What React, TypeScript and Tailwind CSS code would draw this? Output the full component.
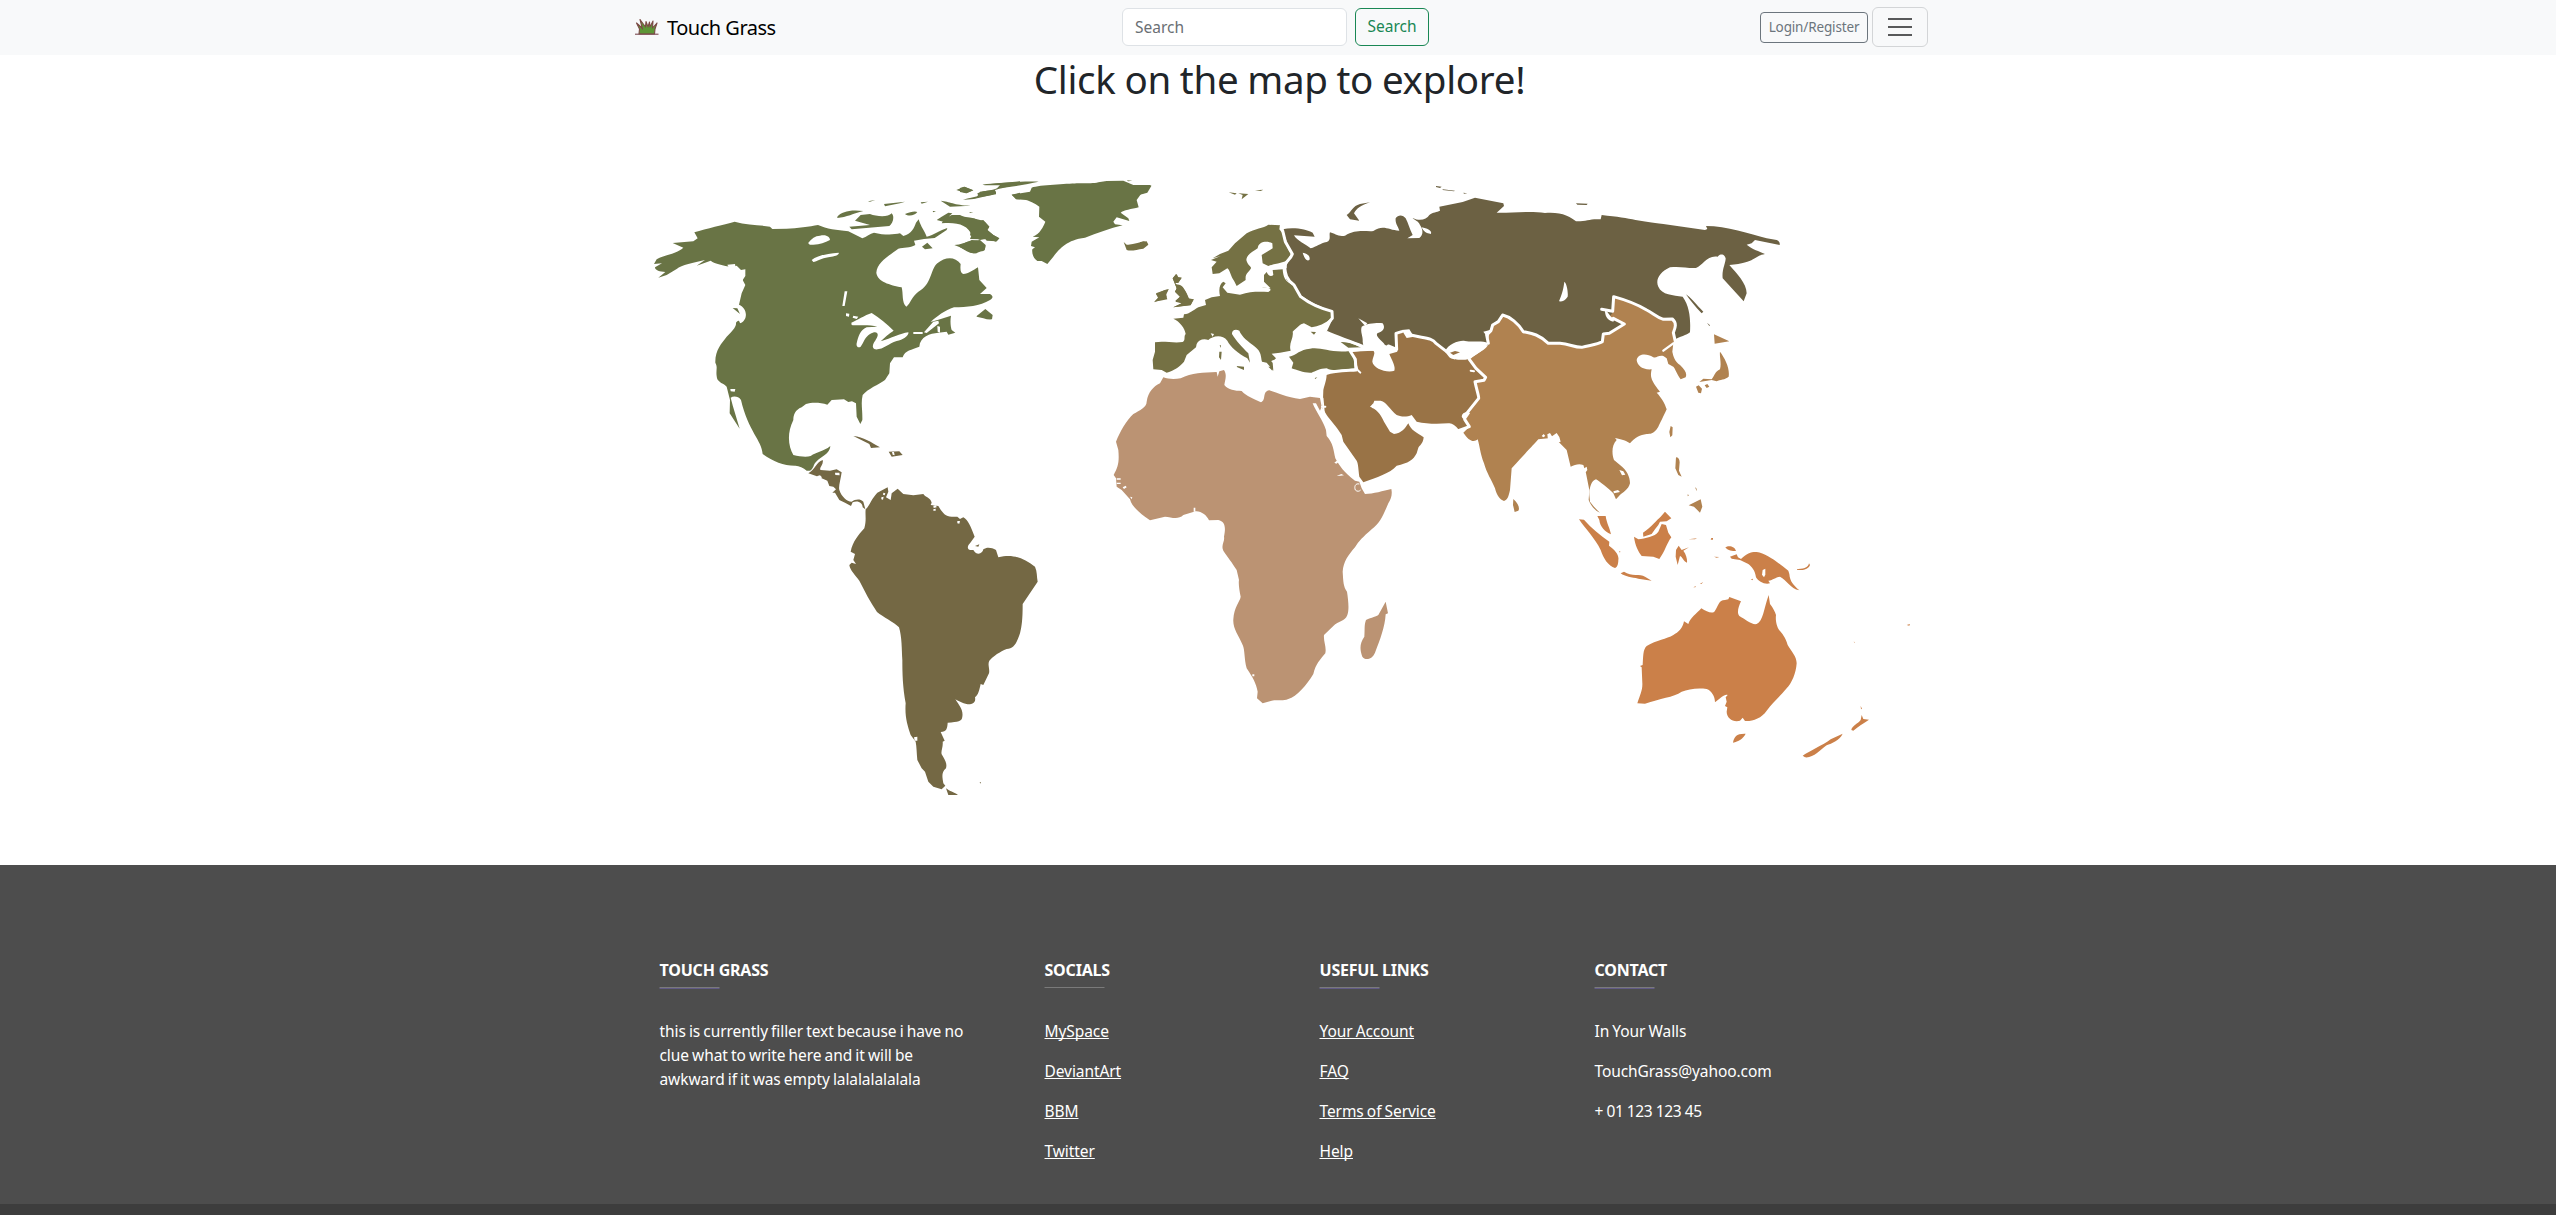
import React from "react";

const NA = "#697445";
const SA = "#746844";
const EU = "#757144";
const RU = "#6C6143";
const ME = "#997346";
const AS = "#B08250";
const AF = "#BB9373";
const OC = "#CB8049";

function NorthAmerica() {
  return (
    <g transform="translate(640 170) scale(.33333)" fill={NA}>
      <path d="M42,282 L50,268 C70,255 110,252 130,233 L98,219 160,214 173,205 163,187 C200,175 250,165 284,155 C320,165 360,165 390,170 L397,177 440,176 C470,175 510,170 534,165 C560,177 590,180 625,184 L667,205 C680,200 690,190 702,188 C730,195 760,195 780,190 L790,198 C815,190 822,175 828,158 L836,148 C842,170 855,185 860,200 C882,195 900,180 922,174 L920,180 884,204 852,207 822,212 826,225 C810,234 790,232 775,236 C750,255 712,275 709,308 C712,335 750,345 785,352 C790,370 785,400 799,410 C812,400 815,380 835,365 C875,345 870,300 892,280 C915,260 945,258 962,282 C960,300 962,310 970,312 C985,312 1000,300 1014,292 L1018,330 1040,354 1020,372 1050,372 C1060,378 1060,385 1050,390 C1020,408 980,412 942,412 C915,420 890,440 872,456 L900,448 933,437 C930,455 932,470 935,480 L946,488 925,494 920,485 895,488 C870,490 840,500 838,530 C815,540 795,540 788,562 L762,562 750,580 748,610 735,630 C715,645 685,655 668,675 C662,700 668,720 667,750 L661,762 650,740 648,700 636,694 625,696 612,688 575,690 562,704 C540,697 515,697 498,702 L485,712 C465,720 460,735 460,750 C440,790 445,830 460,855 C480,860 500,862 512,858 C530,845 550,845 571,828 C568,860 530,860 520,890 C515,900 510,904 500,902 C490,893 475,886 465,887 C430,887 400,875 368,852 C365,810 325,785 303,690 C295,678 280,678 272,683 C280,715 290,745 299,776 L269,730 270,690 260,650 C250,640 240,640 232,628 C225,600 235,595 226,578 C225,540 245,520 260,500 C275,485 290,470 288,458 C295,450 298,450 300,460 C325,450 323,415 297,404 L305,370 316,345 308,330 316,318 316,298 303,300 290,287 275,292 C250,285 225,283 212,272 L170,287 195,270 C160,278 125,285 110,297 L80,315 55,323 76,306 C60,305 45,302 45,292 L66,280 Z" />
      <path d="M592,140 C605,125 630,118 670,123 C640,130 620,142 592,144Z M628,170 L690,165 645,152 662,135 690,132 C710,140 745,142 755,130 C765,140 758,160 748,168 L635,178Z M732,102 L795,95 780,100 735,109Z M684,94 L706,90 690,95Z M795,132 C810,126 825,122 832,126 C825,137 805,140 795,132Z M842,97 L864,95 845,101Z M902,92 C930,95 940,105 992,107 L930,110Z M878,123 L888,123 880,127Z M949,60 L972,50 1000,61 978,70Z M1027,44 L1140,34 1140,40 C1110,50 1080,55 1065,60 L1068,70 C1050,78 1030,80 1010,82 L1020,65 C1050,62 1070,60 1085,46 L1035,46Z M968,88 L1010,84 1000,87Z M890,150 L905,140 925,128 937,130 910,155 Z M935,135 L960,135 C975,145 1005,140 1015,152 L1030,150 1048,170 1042,180 1060,195 1078,205 1070,214 1040,212 1030,198 1020,208 990,207 995,195 C985,165 950,155 905,160 C910,150 925,140 935,135Z M943,225 C960,225 985,215 995,210 C1015,210 1035,220 1035,232 C1038,248 1020,240 1010,250 C990,252 985,240 943,225Z M846,230 L862,218 878,235 855,238Z M1010,438 L1036,417 1058,435 1056,448 C1040,450 1025,442 1010,440Z M278,414 L292,415 300,432Z M988,126 L1000,128 990,129Z M1115,74 L1140,68 1140,88 1128,88Z" />
      <g fill="#fff" stroke="none">
        <path d="M505,218 C515,205 525,198 540,197 C560,192 570,202 570,210 C555,218 540,223 520,224 C508,225 505,222 505,218Z M515,270 C530,258 560,250 596,248 C600,255 580,260 565,262 C545,265 530,275 520,276Z M614,364 L622,364 614,408 607,408Z M618,430 L628,431 627,440 618,438Z M640,437 L655,440 650,447 638,443Z M634,458 C650,452 675,435 695,429 C720,445 740,462 761,482 C745,492 735,502 722,514 C755,505 780,490 805,487 C808,495 790,510 770,513 C745,520 730,540 705,538 C690,530 705,515 708,508 C720,490 710,480 690,492 C675,500 670,520 662,530 C655,535 648,530 650,520 C655,500 660,480 680,472 L712,470 C690,463 650,468 635,465Z M820,486 L848,486 848,492 820,492Z M852,487 L880,455 895,452 897,460 860,489Z M892,468 L900,470 900,488 893,485Z M271,657 L286,657 284,665 272,664Z M262,284 L285,282 288,298 266,292Z M300,320 L310,322 306,340 300,336Z M765,565 L778,565 770,578Z" />
      </g>
    </g>
  );
}

function Greenland() {
  return (
    <g transform="translate(960 160) scale(.33333)">
      <path fill={NA} d="M155,104 L210,95 215,83 C240,75 320,72 350,70 C380,68 400,72 415,67 L440,63 490,62 520,75 575,75 562,83 558,97 543,102 530,120 536,142 C515,148 490,150 482,158 L505,175 508,183 470,172 460,185 465,193 488,196 C450,205 410,220 375,233 C320,240 300,265 280,290 L262,312 245,303 232,303 C220,295 215,280 217,268 L225,262 213,258 215,245 238,232 218,230 C240,222 250,200 256,185 L237,170 238,140 C225,130 205,122 198,120 L170,118Z M500,61 L517,62 505,64Z M68,73 C120,68 190,64 236,65 C200,72 150,83 112,84 L120,75 80,75Z M0,84 L14,80 40,91 20,100 0,96Z M8,119 L55,108 52,100 C70,92 100,88 108,95 L108,103 C80,108 60,114 40,117Z M0,168 C20,175 55,175 75,186 L88,200 82,210 100,225 118,235 108,245 85,238 72,238 60,240 30,226 32,215 C20,200 10,192 0,190Z M0,256 C20,242 40,242 60,240 L77,255 C78,270 65,275 55,270 C45,290 20,275 0,262Z" />
      <path fill={EU} d="M491,246 L500,254 C520,256 540,244 560,244 L565,254 550,266 C530,268 515,275 500,270Z M582,427 L595,415 588,402 615,390 626,388 618,400 620,412 600,420Z M638,355 L650,342 655,352 665,353 655,368 645,370 650,374 C665,372 672,385 680,400 L688,418 702,418 692,435 640,442 665,430 646,425 660,410 645,395 650,385Z" />
    </g>
  );
}

function SouthAmerica() {
  return (
    <g transform="translate(800 420) scale(.33333)">
      <path fill={SA} d="M263,202 L265,215 258,232 272,240 275,220 293,206 310,222 340,226 370,222 C375,232 392,232 395,248 L392,255 415,258 C425,275 435,290 455,290 L472,290 480,297 490,292 C505,300 512,320 524,350 L510,370 C500,380 500,392 520,390 C532,410 548,400 550,388 C560,380 575,382 588,390 L595,412 C640,400 670,415 705,440 C712,455 710,470 713,485 L668,552 C668,600 665,620 660,640 C648,675 640,685 620,687 C600,695 580,708 568,722 C562,735 570,745 567,760 L550,795 542,792 C538,810 535,825 525,832 C528,845 520,852 510,853 C490,853 480,845 466,838 C480,860 490,870 487,890 C485,905 475,905 443,908 C442,925 440,935 422,936 L434,962 428,965 C430,980 422,995 425,1003 C435,1020 442,1030 438,1045 C422,1058 428,1075 430,1090 L436,1097 425,1108 400,1100 385,1085 375,1055 365,1045 352,1020 C350,1000 350,980 347,965 L332,945 C322,915 314,890 317,850 C308,800 307,760 307,720 C305,690 306,650 297,622 C280,605 250,592 231,576 C210,545 195,515 178,482 C165,465 150,450 148,435 L155,428 168,432 160,420 165,402 152,395 C158,365 175,345 193,325 C200,300 195,285 197,268 C210,255 215,235 232,218Z" />
      <path fill={SA} d="M25,160 C45,150 50,125 68,120 C72,135 55,145 62,150 L90,152 110,148 125,157 C122,180 115,200 118,210 C125,230 140,245 155,245 C165,238 180,235 190,245 L196,268 188,262 C188,250 175,240 158,247 L153,258 135,248 118,240 105,218 97,218 108,208 100,200 88,198 82,182 55,170Z M160,48 C190,50 215,68 240,82 L213,84 208,72Z M266,95 L298,94 308,105 275,110Z M438,1105 C450,1115 460,1115 474,1125 L445,1125 Z M525,378 L538,373 535,380Z M539,1086 L543,1087 541,1091Z" />
      <path fill="#fff" d="M105,158 L118,158 119,166 106,165Z M52,168 L60,166 66,172 60,178 50,175Z M250,218 L256,220 254,226 249,224Z M244,232 L251,230 249,239 244,238Z M400,257 L408,256 410,262 401,264Z M400,268 L407,266 407,272 400,272Z M472,303 L480,303 478,311 472,310Z M276,96 L282,96 284,106 278,104Z M342,952 L352,950 352,962 344,962Z" />
    </g>
  );
}

function Africa() {
  return (
    <g transform="translate(1100 260) scale(.33333)">
      <path fill={AF} d="M190,352 C205,358 225,358 242,355 C275,338 310,338 350,336 L353,350 358,334 372,330 C382,345 375,360 373,375 C385,390 405,392 425,393 C440,410 460,415 483,427 C500,420 485,395 508,391 C530,398 560,412 600,417 L630,410 660,414 665,440 660,452 648,430 638,430 C648,455 668,480 678,510 L680,528 C700,550 700,570 706,595 C720,620 730,635 765,662 L778,665 785,685 L795,702 C820,702 850,692 874,687 C878,705 872,718 865,730 C850,765 840,790 815,808 C790,830 775,845 765,862 C745,885 730,905 728,935 C730,965 730,980 741,995 C745,1020 748,1050 742,1065 C735,1085 715,1082 700,1098 L672,1125 C670,1145 680,1160 676,1180 C660,1200 648,1210 640,1242 C620,1275 590,1310 565,1317 C545,1325 535,1318 515,1322 L488,1330 471,1315 473,1295 C468,1270 460,1255 440,1225 C432,1195 435,1170 428,1155 C415,1125 398,1105 400,1078 C402,1040 420,1025 422,1010 C418,990 415,970 417,960 L410,930 C395,905 385,895 370,872 C362,855 375,845 372,830 C378,800 375,785 355,780 L327,781 C320,765 300,750 282,755 L250,765 C235,780 215,772 195,770 L150,781 C120,760 95,740 90,718 L65,690 50,680 48,655 41,645 C55,620 58,605 55,570 L48,545 C60,515 80,480 100,462 C120,450 140,442 140,425 C145,395 160,380 180,370Z M857,1025 L864,1060 857,1063 C855,1100 840,1140 825,1178 C815,1200 795,1202 787,1190 C778,1165 780,1150 793,1130 C795,1110 792,1095 798,1080 C815,1072 830,1070 835,1065Z" />
      <path fill="#fff" d="M457,1243 h6 v6 h-6z M281,743 h5 v12 h-5z M50,655 l12,0 0,4 -12,0z M50,668 l12,0 0,4 -12,0z M68,682 l9,-5 3,5 -8,5z M703,608 l10,-8 4,5 -8,6z M710,648 l14,-6 8,4 -10,1z M90,710 l7,2 -2,6z" />
      <path fill="none" stroke="#fff" strokeWidth="3" d="M778,672 c-12,-3 -16,8 -12,18 c6,6 12,4 16,0" />
    </g>
  );
}

function Eurasia() {
  return (
    <g transform="translate(1140 180) scale(.33333)">
      <path fill={RU} d="M428,148 C460,140 500,148 518,158 L524,170 462,166 C470,182 500,195 512,205 C530,200 540,190 560,186 C575,180 566,165 570,157 C585,160 595,172 615,167 C650,145 680,156 700,153 C730,132 745,150 778,152 C775,140 765,130 767,115 C775,102 790,105 797,115 C805,130 808,145 818,165 L802,175 838,174 C850,165 850,150 840,135 C835,122 825,122 818,114 C840,125 860,118 868,105 C880,95 890,98 900,92 L898,80 968,66 1005,53 1090,70 1092,78 1070,98 C1100,100 1170,92 1215,99 C1265,95 1290,110 1308,124 C1340,125 1350,115 1382,118 L1385,105 C1480,115 1500,125 1570,132 L1695,150 1702,147 1698,138 C1760,138 1830,162 1880,175 L1910,180 C1918,183 1920,188 1919,195 L1845,180 1835,190 1820,194 C1840,210 1855,212 1875,222 C1840,228 1850,248 1768,255 C1790,280 1820,310 1820,340 L1811,364 1748,295 C1745,270 1757,250 1757,235 C1752,220 1740,222 1733,230 C1700,225 1690,255 1668,264 C1640,265 1620,258 1590,262 C1560,275 1545,300 1555,320 C1565,345 1600,345 1628,350 C1650,380 1652,420 1650,457 C1640,467 1620,468 1600,482 L1400,520 1045,495 920,520 770,520 700,500 668,497 C640,480 600,478 560,455 L579,415 578,395 520,370 480,345 465,318 440,300 435,265 455,225 435,170Z M1638,343 C1650,350 1670,375 1690,395 L1685,400 C1665,380 1650,360 1638,343Z M1701,428 l9,8 -2,2z M1308,70 L1343,71 1340,75 1312,74Z M620,105 C635,95 638,78 660,72 L690,67 C660,78 650,85 642,100 L658,122 630,118Z M888,18 L905,20 900,24 888,21Z M908,28 L945,32 942,34 908,30Z M970,38 l12,2 -10,1z" />
      <path fill={ME} d="M560,580 L650,570 658,578 648,545 632,515 700,512 740,520 772,512 768,460 C780,455 795,450 805,450 L820,472 C850,475 875,480 885,488 L920,518 995,535 1037,595 1005,605 1017,655 980,705 970,715 988,740 957,750 C945,735 935,728 925,730 C890,732 860,732 830,725 L815,705 C800,712 780,710 770,705 C750,690 740,665 722,662 L703,662 695,683 C715,690 725,710 732,725 L750,755 762,762 C785,760 795,745 805,730 C812,750 830,758 851,772 C850,790 838,798 835,803 L830,820 C820,840 805,850 770,857 C750,880 710,892 670,907 L658,890 C655,870 655,850 650,842 L610,785 605,765 C590,740 570,720 560,705 L548,685 550,630 C555,610 560,600 560,580Z" />
      <path fill={AS} d="M985,540 C1010,520 1040,510 1047,490 L1035,462 1052,455 1055,435 1075,425 1088,403 C1110,410 1135,430 1150,455 C1175,460 1190,460 1225,490 L1250,490 C1280,490 1300,500 1325,502 L1385,485 1388,460 1410,460 1453,432 1405,415 1420,395 1422,350 C1450,355 1480,370 1500,378 C1520,390 1540,400 1560,412 L1600,417 C1612,430 1605,445 1600,455 L1607,480 1600,490 1597,515 C1600,530 1605,545 1620,555 C1635,570 1642,580 1637,592 L1622,598 C1610,580 1605,565 1600,560 L1585,552 1580,535 1570,528 C1555,525 1550,535 1540,532 C1520,520 1495,520 1490,540 C1492,555 1505,570 1535,568 C1530,590 1532,600 1560,635 L1550,638 C1562,650 1575,670 1580,688 C1570,710 1560,730 1555,740 C1540,765 1530,760 1520,762 C1500,765 1485,772 1470,790 C1455,780 1445,778 1425,774 L1430,780 C1415,795 1415,820 1422,840 L1440,855 C1460,870 1470,890 1470,910 C1465,930 1450,935 1435,950 L1428,958 1420,940 C1405,925 1380,905 1368,898 C1355,902 1348,920 1348,945 L1350,965 C1360,978 1370,990 1380,998 C1360,990 1350,970 1346,960 L1348,930 1338,880 1330,855 C1315,850 1305,855 1292,860 L1280,810 1260,790 1245,775 1225,775 1195,778 C1180,795 1170,805 1115,865 L1110,930 C1105,955 1100,960 1092,963 C1080,960 1070,945 1065,925 C1055,900 1040,880 1032,850 C1020,820 1020,800 1013,778 C1000,790 985,780 970,758 L988,740 970,715 980,705 1017,655 1005,605 1037,595Z" />
      <path fill={AS} d="M1740,515 C1755,535 1770,565 1766,590 C1755,600 1740,598 1730,604 L1715,600 1678,606 1690,596 1715,598 C1725,585 1725,575 1740,568 C1745,550 1738,530 1740,515Z M1722,463 L1768,484 1724,491Z M1668,620 l8,-4 10,10 -3,14 -8,-2z M1694,616 l8,-4 6,8 -8,4z M1592,738 l6,4 -1,24 -6,6 -3,-16z M1608,832 q10,0 11,15 l-2,25 8,18 -10,-5 -9,-20z M1646,976 L1682,958 1687,980 1680,998 1662,980Z M1120,957 C1135,970 1140,985 1135,992 L1124,996 1119,975Z M1665,921 l5,5 0,8z M1643,943 l4,3 -4,3z" />
      <path fill={EU} d="M218,282 L215,262 230,245 213,240 242,228 218,235 240,222 265,212 285,190 320,160 C345,145 370,145 385,134 L420,136 418,148 432,165 C437,185 440,205 453,222 L440,243 C420,250 400,252 385,258 L368,250 365,225 398,205 397,190 C385,182 355,182 353,205 C340,215 320,222 319,240 C322,255 335,260 333,265 C325,280 315,280 317,300 L290,318 282,302 C272,290 270,270 262,265 L238,280Z M266,37 L290,40 285,44Z M295,40 L325,42 305,58 308,45Z M345,31 l25,-2 -8,4z" />
      <path fill={NA} d="M0,18 L34,18 22,38 0,44z" />
      <path fill={EU} d="M45,487 C70,482 100,490 128,486 C138,480 130,470 137,462 C135,445 120,425 100,416 L130,413 132,403 C150,402 160,390 175,382 L198,375 195,360 215,352 240,348 C235,325 240,310 250,305 L257,310 248,322 262,338 300,344 C330,335 350,335 385,336 C400,328 388,322 365,322 L392,325 372,305 372,285 380,276 C385,290 395,290 400,285 L398,270 428,268 C430,290 432,305 465,318 L480,350 C500,365 530,380 576,395 L575,415 C555,430 535,440 515,442 L492,430 C480,432 470,445 458,455 C462,475 445,490 452,512 L420,518 395,521 408,535 C400,545 388,540 398,548 L400,572 380,548 366,545 C362,530 365,515 345,500 C325,485 305,470 298,452 C285,445 275,452 276,462 C290,485 305,500 325,520 L330,548 322,535 C295,520 270,500 262,482 C245,460 215,470 205,480 C190,475 175,480 170,492 L168,502 140,525 132,545 C120,560 100,572 80,578 L65,570 40,568 38,540 45,515Z" />
      <path fill={EU} d="M447,530 C470,525 480,508 510,506 C545,500 570,520 630,513 L640,530 645,565 C600,570 580,575 560,565 C540,565 525,575 515,578 C495,580 470,570 455,565 L460,548Z M602,486 C630,485 650,498 663,502 L625,503Z M43,365 L55,352 48,340 75,330 86,328 78,345 82,358 60,362Z M98,295 L108,282 112,292 125,293 115,308 105,310 112,315 C128,315 138,335 145,355 L160,358 152,376 100,382 125,370 106,362 120,350 105,335 110,325Z M0,187 L12,184 24,192 8,204 0,206z M238,515 l7,0 -2,25 -6,-8z M239,496 l4,0 -1,8z M290,558 l22,2 0,10 -20,-8z M512,455 L528,456 522,464Z M524,594 l8,-2 -6,5z M385,560 l14,0 -2,12z" />
      <g fill="#fff">
        <path d="M665,440 C680,430 715,428 728,430 C738,445 728,455 712,460 C705,470 725,480 735,495 L770,505 772,515 748,522 C755,540 768,560 763,572 C740,580 700,565 697,545 C698,530 708,520 700,512 L672,510 668,485 C670,470 660,455 665,440Z M655,415 L682,430 675,437Z" />
        <path d="M488,218 C505,220 512,232 508,240 C500,245 493,235 488,218Z M845,142 C865,145 878,155 872,162 C860,160 850,155 845,142Z M1273,305 C1280,310 1285,335 1283,350 C1275,362 1265,366 1257,364 C1265,345 1270,330 1273,305Z" />
        <path d="M915,515 C925,490 960,480 975,483 C1000,488 1025,480 1045,490 C1035,510 1010,520 992,536 C965,542 935,540 928,532Z M785,450 L808,448 822,470 800,474Z M1395,392 C1405,390 1408,415 1425,415 L1420,425 C1400,420 1395,405 1395,392Z M970,700 q15,-10 20,0 l-14,20 q-18,-8 -6,-20z M1030,455 l20,-5 -5,25z M212,460 l10,2 -4,8z M1205,768 l6,-6 5,6 -6,4z M1222,763 l8,-4 6,10 14,-10 8,12 4,14 -14,4 -6,-12 -18,4z M1420,934 l14,-4 6,6 -18,4z M1330,866 l10,-6 2,10 -6,8z M1438,870 l12,4 6,10 -10,2z M690,680 l10,-10 8,16z" />
      </g>
      <path fill={ME} d="M930,518 l15,-5 15,4 -20,8z" />
      <g fill="none" stroke="#fff" strokeWidth="9" strokeLinejoin="round" strokeLinecap="round">
        <path d="M424,140 L428,152 436,185 457,222 452,232 438,248 434,262 C436,280 438,298 462,315 L482,350 C505,368 540,385 576,394 L577,415 562,432" />
        <path d="M395,264 L436,261" />
        <path d="M562,458 C590,472 630,482 668,499" />
        <path d="M666,508 L630,512 646,538 648,570 C610,572 580,572 560,580" />
        <path d="M745,498 L770,508 768,460 785,455" />
        <path d="M812,465 C850,475 875,472 888,490 L920,515" />
        <path d="M988,538 L1008,565 1037,592 1032,601 1005,605 C1010,630 1017,650 1016,655 L980,700" />
        <path d="M974,718 L988,740 955,752" />
        <path d="M1045,490 L1040,465 1053,452 1058,435 1075,425 1088,405 C1110,410 1135,430 1150,455 C1175,460 1195,462 1225,490 L1260,490 C1290,492 1300,502 1325,502 C1350,495 1370,495 1387,485 L1390,462 1408,460 1453,432 1420,415" />
        <path d="M1385,388 L1418,394 1421,350 C1450,358 1490,372 1520,390 C1540,400 1550,412 1570,418 L1597,417 C1612,430 1605,445 1600,458 L1606,485" />
        <path d="M1600,490 L1570,512" strokeWidth="7" />
        <path d="M992,572 l10,2" strokeWidth="6" />
        <path d="M548,655 L552,700" strokeWidth="5" />
        <path d="M546,680 l10,0 M655,572 l6,6" strokeWidth="6" />
      </g>
    </g>
  );
}

function Oceania() {
  return (
    <g transform="translate(1560 460) scale(.33333)" fill={OC}>
      <path d="M626,405 L630,432 C640,445 645,455 648,465 C645,490 655,510 662,515 C678,535 680,545 683,555 C695,575 710,590 710,610 C708,640 695,670 680,685 C660,710 640,725 620,752 C605,775 575,785 555,783 L548,773 540,782 C520,788 500,775 500,755 L502,742 495,738 500,725 497,712 503,705 C495,700 480,715 465,727 C465,710 455,692 440,687 C410,683 385,688 365,695 C340,712 300,715 255,731 L232,730 C240,705 248,690 247,670 L245,622 240,618 248,615 C250,590 248,570 260,558 C290,540 320,537 340,525 C355,517 368,505 372,484 L385,492 C390,475 410,460 424,445 C440,455 455,462 463,455 C475,440 475,420 495,420 L505,418 508,411 543,424 C535,440 530,460 538,468 C560,480 575,495 590,492 C610,482 610,450 626,405Z" />
      <path d="M519,848 C522,830 530,820 557,821 C550,835 535,845 519,848Z M728,887 C745,875 790,855 812,838 L848,821 C840,840 815,850 800,856 C780,870 760,895 735,892Z M874,810 C875,798 895,790 902,780 L905,765 910,777 927,779 C910,790 895,800 880,812Z M902,738 l4,8 -3,2z M57,178 L72,179 C95,205 120,225 148,245 L147,257 C165,270 178,285 175,300 C175,315 170,323 165,324 C145,318 130,295 122,270 C105,235 75,205 57,178Z M112,168 L137,168 C140,190 150,205 153,223 C135,215 120,200 118,180Z M182,340 L192,335 C215,350 240,340 255,350 L275,362 235,356 C215,352 195,350 182,340Z M249,218 C275,200 290,180 302,170 L315,155 334,175 320,184 300,185 295,195 285,208 275,222 250,230Z M222,230 L235,238 C255,235 285,230 295,215 L305,192 318,195 325,218 334,232 C320,250 315,275 298,297 L280,290 245,288 C235,275 225,255 222,230Z M347,290 L348,270 356,257 365,270 387,262 370,272 C380,285 382,300 381,308 C370,305 368,290 360,288 L353,315Z M385,238 L411,235 405,238Z M454,234 l5,0 0,5 -7,0z M462,290 l16,1 -8,2z M400,382 l8,-4 -2,4z M420,371 l10,-5 -6,6z M496,262 C505,255 525,258 528,273 C515,274 500,270 496,262Z M510,290 L530,283 534,292 543,297 C560,280 575,275 590,276 C620,280 650,305 685,332 L688,342 C690,365 700,375 718,391 C690,385 680,360 660,350 C645,352 640,360 625,362 L630,370 C615,375 595,365 588,352 C585,330 575,320 565,312 L540,300 515,296Z M711,327 C735,328 745,320 747,310 L750,315 C745,328 730,332 711,329Z M572,358 l6,-2 1,5z M1040,495 l10,-3 -2,5z M881,545 l3,1 0,3z M177,274 l4,0 -1,4z" />
      <path fill="#fff" d="M608,330 l8,-4 0,18 -4,8 -6,-8z" />
    </g>
  );
}

function WorldMap() {
  return (
    <svg viewBox="620 120 1320 700" width="1320" height="700" role="img" aria-label="World map">
      <Africa />
      <Eurasia />
      <NorthAmerica />
      <Greenland />
      <SouthAmerica />
      <Oceania />
    </svg>
  );
}

function GrassIcon() {
  return (
    <svg width="24" height="20" viewBox="0 0 24 20" fill="none">
      <path d="M4,16 L4.5,11 L1.5,5 L6,9 L7.5,11 L5,1.5 L10.5,9 L11,3.5 L13,9 L14.5,4 L15,9 L18,3 L17.5,10 L22,5 L20,11 L19.5,16Z" fill="#5d9636" stroke="#7b4a45" strokeWidth="1.1" strokeLinejoin="round" />
      <path d="M0,16.2 H23.5" stroke="#7b4a50" strokeWidth="1.1" />
    </svg>
  );
}

function Rule({ plain }: { plain?: boolean }) {
  return (
    <div className="mt-[5px] mb-[30px] w-[60px]">
      <div className="h-px bg-[#7a7a7a]" />
      <div className={plain ? "h-px" : "h-px bg-[#615a86]"} />
    </div>
  );
}

function Column({ title, children, plain }: { title: string; children: React.ReactNode; plain?: boolean }) {
  return (
    <div>
      <h6 className="text-[16px] leading-6 font-bold tracking-[-0.2px] [word-spacing:0px]">{title}</h6>
      <Rule plain={plain} />
      {children}
    </div>
  );
}

function Links({ items }: { items: string[] }) {
  return (
    <ul className="flex flex-col gap-4 leading-6">
      {items.map((t) => (
        <li key={t}>
          <a className="underline decoration-1 underline-offset-1 [text-decoration-skip-ink:none]">{t}</a>
        </li>
      ))}
    </ul>
  );
}

export default function App() {
  return (
    <div className="h-[1215px] overflow-hidden bg-white text-[#212529] font-['Noto_Sans',sans-serif]">
      <nav className="h-[55px] bg-[#f8f9fa]">
        <div className="mx-auto flex h-full w-[1296px] items-center justify-between pl-[5px]">
          <a className="flex w-[487px] shrink-0 items-center gap-[8px] text-[20px] leading-[30px] tracking-[-0.5px] text-black">
            <GrassIcon />
            Touch Grass
          </a>
          <div className="flex w-[307px] shrink-0 -translate-y-px gap-2">
            <input className="h-[38px] w-[225px] rounded-md border border-[#dee2e6] bg-white px-3 text-[15.5px] placeholder:text-[#6a6f74]" placeholder="Search" />
            <button className="h-[38px] w-[74px] rounded-md border border-[#198754] pt-px text-[15.5px] text-[#198754]">Search</button>
          </div>
          <div className="-mr-[2px] ml-auto flex shrink-0 items-center gap-1">
            <button className="h-[31px] w-[108px] rounded-[4px] border border-[#6c757d] text-[13.5px] tracking-[-0.15px] text-[#6c757d]">Login/Register</button>
            <button aria-label="Menu" className="flex h-[40px] w-[56px] -translate-y-px flex-col items-center justify-center gap-[6px] rounded-md border border-[#d3d5d7]">
              <span className="h-[2px] w-6 bg-[#58595a]" />
              <span className="h-[2px] w-6 bg-[#58595a]" />
              <span className="h-[2px] w-6 bg-[#58595a]" />
            </button>
          </div>
        </div>
      </nav>
      <main className="flex h-[810px] flex-col items-center">
        <h1 className="mb-[17px] pl-[3px] text-[38.5px] leading-[48px] tracking-[-0.25px] [word-spacing:-1px]">Click on the map to explore!</h1>
        <div className="pl-[4px]">
          <WorldMap />
        </div>
      </main>
      <footer className="flex h-[350px] flex-col bg-[#4d4d4d] text-[15.5px] tracking-[-0.08px] [word-spacing:-0.8px] text-white">
        <div className="mx-auto grid h-[339px] w-[1238px] translate-x-[0.5px] grid-cols-[385px_275px_275px_303px] pt-[93px]">
          <Column title="TOUCH GRASS">
            <p className="w-[320px] leading-6">
              this is currently filler text because i have no
              <br />
              clue what to write here and it will be
              <br />
              awkward if it was empty lalalalalalala
            </p>
          </Column>
          <Column title="SOCIALS" plain>
            <Links items={["MySpace", "DeviantArt", "BBM", "Twitter"]} />
          </Column>
          <Column title="USEFUL LINKS">
            <Links items={["Your Account", "FAQ", "Terms of Service", "Help"]} />
          </Column>
          <Column title="CONTACT">
            <div className="flex flex-col gap-4 leading-6">
              <p>In Your Walls</p>
              <p>TouchGrass@yahoo.com</p>
              <p className="tracking-[-0.35px] [word-spacing:-0.3px]">+ 01 123 123 45</p>
            </div>
          </Column>
        </div>
        <div className="h-[11px] bg-[#3d3d3d]" />
      </footer>
    </div>
  );
}
